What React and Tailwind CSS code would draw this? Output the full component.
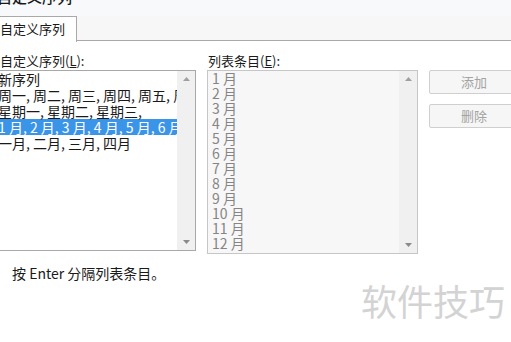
const leftItems = [
  '新序列',
  '周一, 周二, 周三, 周四, 周五, 周六, 周日',
  '星期一, 星期二, 星期三,',
  '1 月, 2 月, 3 月, 4 月, 5 月, 6 月, 7 月, 8 月, 9 月, 10 月, 11 月, 12 月',
  '一月, 二月, 三月, 四月',
];

const months = ['1 月', '2 月', '3 月', '4 月', '5 月', '6 月', '7 月', '8 月', '9 月', '10 月', '11 月', '12 月'];

function ScrollBar() {
  return (
    <div className="w-[18px] shrink-0 bg-[#f0f0f0] flex flex-col items-center justify-between py-[6px]">
      <svg width="7" height="4" viewBox="0 0 7 4"><path d="M0 4 L3.5 0 L7 4 Z" fill="#a0a0a0" /></svg>
      <svg width="7" height="4" viewBox="0 0 7 4"><path d="M0 0 L3.5 4 L7 0 Z" fill="#8a8a8a" /></svg>
    </div>
  );
}

export default function App() {
  return (
    <div
      className="w-[511px] h-[342px] overflow-hidden bg-white relative text-[#1a1a1a]"
      style={{ fontFamily: '"Noto Sans CJK SC", "Noto Sans", sans-serif' }}
    >
      {/* window title, cut at the top */}
      <div className="h-[16px] overflow-hidden bg-[#f7f9fb]">
        <div className="mt-[-13px] ml-[-3px] text-[15px] font-medium leading-[20px]">自定义序列</div>
      </div>

      {/* tab strip */}
      <div className="flex h-[25px] bg-[#f7f7f7]">
        <div className="w-[78px] h-[26px] bg-white border-r border-t border-[#a9a9a9] text-[13px] leading-[24px] pl-[1px] ml-[-1px] z-10">
          自定义序列
        </div>
        <div className="flex-1 border-b border-[#a9a9a9]" />
      </div>

      {/* tab panel */}
      <div className="pt-[10px] text-[13px]">
        <div className="flex gap-[11px]">
          <div className="w-[202px] ml-[-6px] shrink-0">
            <div className="leading-[19px] pl-[6px]">自定义序列(<span className="underline">L</span>):</div>
            <div className="h-[181px] border border-[#a8a8a8] bg-white flex">
              <div className="flex-1 overflow-hidden text-[14px] leading-[16px] whitespace-nowrap">
                {leftItems.map((t, i) => (
                  <div key={i} className={i === 3 ? 'bg-[#3a95e8] text-white pl-[3px]' : 'pl-[3px]'}>
                    {t}
                  </div>
                ))}
              </div>
              <ScrollBar />
            </div>
          </div>

          <div className="w-[211px] shrink-0">
            <div className="leading-[19px] pl-[1px]">列表条目(<span className="underline">E</span>):</div>
            <div className="h-[184px] border border-[#c6c6c6] bg-[#f7f7f7] flex">
              <div className="flex-1 overflow-hidden text-[14px] leading-[15px] text-[#858585] pl-[4px]">
                {months.map((m) => (
                  <div key={m}>{m}</div>
                ))}
              </div>
              <ScrollBar />
            </div>
          </div>

          <div className="flex flex-col gap-[10px] pt-[19px]">
            <button className="w-[90px] h-[24px] border border-[#cfcfcf] rounded-[2px] bg-[#f6f6f6] text-[#a3a3a3] text-[13px]">
              添加
            </button>
            <button className="w-[90px] h-[24px] border border-[#cfcfcf] rounded-[2px] bg-[#f6f6f6] text-[#a3a3a3] text-[13px]">
              删除
            </button>
          </div>
        </div>

        <div className="mt-[9px] pl-[12px] leading-[20px] text-[14px]">按 Enter 分隔列表条目。</div>
      </div>

      {/* watermark */}
      <div className="absolute left-[361px] top-[275px] text-[36px] leading-[50px] text-[#d3d3d3]">
        软件技巧
      </div>
    </div>
  );
}
